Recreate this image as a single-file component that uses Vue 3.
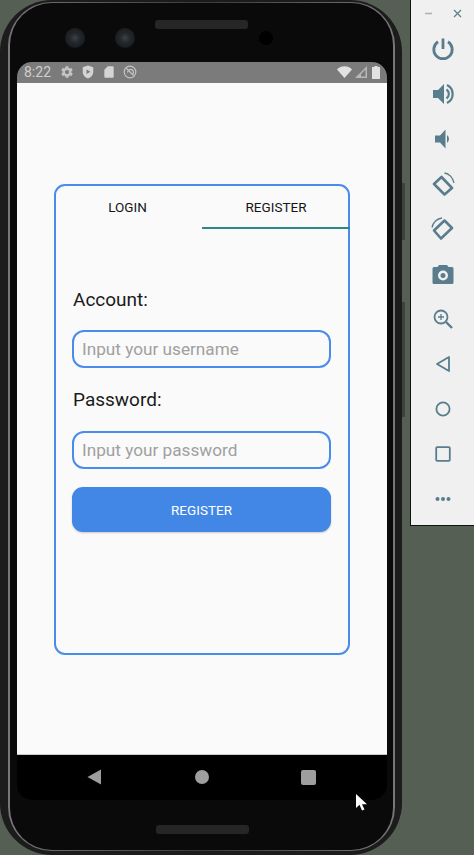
<template>
  <div class="desk">
    <div class="phone">
      <div class="ring">
        <div class="body">
          <div class="top-bezel">
            <span class="cam cam-one"></span>
            <span class="cam cam-two"></span>
            <span class="speaker speaker-top"></span>
            <span class="sensor"></span>
          </div>

          <div class="screen">
            <div class="status">
              <span class="time">8:22</span>
              <svg class="st" width="14" height="14" viewBox="0 0 24 24"><path fill="#c4c4c4" d="M19.4 13c.1-.3.1-.7.1-1s0-.7-.1-1l2.100-1.600c.2-.1.2-.4.1-.6l-2-3.500c-.1-.2-.4-.3-.6-.2l-2.500 1c-.5-.4-1.100-.7-1.700-1l-.4-2.600c0-.3-.2-.5-.5-.5h-4c-.3 0-.5.2-.5.5l-.4 2.600c-.6.3-1.200.6-1.700 1l-2.500-1c-.2-.1-.5 0-.6.2l-2 3.500c-.1.2-.1.5.1.6L4.600 11c-.1.3-.1.700-.1 1s0 .7.1 1l-2.100 1.600c-.2.1-.2.4-.1.6l2 3.500c.1.2.4.3.6.2l2.500-1c.5.4 1.100.7 1.700 1l.4 2.600c0 .3.2.5.5.5h4c.3 0 .5-.2.5-.5l.4-2.600c.6-.3 1.200-.6 1.700-1l2.500 1c.2.1.5 0 .6-.2l2-3.500c.1-.2.1-.5-.1-.6L19.400 13zM12 15.500c-1.900 0-3.500-1.600-3.500-3.500s1.600-3.500 3.500-3.500 3.500 1.600 3.500 3.500-1.600 3.500-3.500 3.500z"/></svg>
              <svg class="st" width="14" height="14" viewBox="0 0 24 24"><path fill="#d4d4d4" fill-rule="evenodd" d="M12 1 3 4v8c0 5 3.800 9.500 9 11 5.200-1.500 9-6 9-11V4l-9-3zM9.500 7.500v8l6.500-4-6.500-4z"/></svg>
              <svg class="st" width="14" height="14" viewBox="0 0 24 24"><path fill="#d4d4d4" d="M10 2h8c1.100 0 2 .9 2 2v16c0 1.100-.9 2-2 2H6c-1.100 0-2-.9-2-2V8l6-6z"/></svg>
              <svg class="st" width="14" height="14" viewBox="0 0 24 24" fill="none" stroke="#c4c4c4" stroke-width="2"><circle cx="12" cy="12" r="10"/><path d="M5.500 5.500 18 18M8 13a5 5 0 1 1 8 3.500"/></svg>
              <span class="spacer"></span>
              <svg width="15" height="12" viewBox="0 0 15 12"><path fill="#e2e2e2" d="M0 3.500C4-.8 11-.8 15 3.500L7.500 12z"/></svg>
              <svg class="signal" width="12" height="12" viewBox="0 0 12 12"><path fill="#b8b8b8" d="M12 0v12H0zM10.500 3.500 6 8v2.500h4.500z"/></svg>
              <svg class="battery" width="8" height="13" viewBox="0 0 8 13"><path fill="#e2e2e2" d="M2.500 0h3v1H8v12H0V1h2.500z"/></svg>
            </div>

            <div class="app">
              <div class="card">
                <div class="tabs">
                  <div class="tab">LOGIN</div>
                  <div class="tab active">REGISTER</div>
                </div>
                <form class="form" @submit.prevent>
                  <label class="label" for="account">Account:</label>
                  <input id="account" class="field" type="text" placeholder="Input your username" />
                  <label class="label second" for="password">Password:</label>
                  <input id="password" class="field" type="password" placeholder="Input your password" />
                  <button class="submit" type="submit">REGISTER</button>
                </form>
              </div>
            </div>

            <div class="nav">
              <svg width="15" height="16" viewBox="0 0 15 16"><path fill="#9e9e9e" d="M14 .5v15L.5 8z"/></svg>
              <span class="nav-dot"></span>
              <span class="nav-square"></span>
            </div>
          </div>

          <div class="bottom-bezel">
            <span class="speaker"></span>
          </div>
        </div>
      </div>
    </div>

    <span class="side-key key-power"></span>
    <span class="side-key key-volume"></span>

    <aside class="toolbar">
      <div class="window-btns">
        <svg width="9" height="9" viewBox="0 0 9 9"><path stroke="#a4b3ba" stroke-width="1.500" d="M1 4.500h7"/></svg>
        <svg width="9" height="9" viewBox="0 0 9 9"><path stroke="#5f8090" stroke-width="1.300" d="m1 1 7 7M8 1 1 8"/></svg>
      </div>
      <button v-for="tool in tools" :key="tool.name" class="tool" :title="tool.name">
        <svg width="24" height="24" viewBox="0 0 24 24" v-html="tool.svg"></svg>
      </button>
    </aside>

    <svg class="cursor" width="13" height="19" viewBox="0 0 13 19"><path fill="#fff" d="M1 1v14l3.500-3.200L7 17.500l2.500-1-2.500-5.200h5z"/></svg>
  </div>
</template>

<script setup>
const fill = 'fill="#5a7d8d"'
const line = 'fill="none" stroke="#5a7d8d" stroke-width="1.800"'

const tools = [
  { name: 'Power', svg: `<path fill="none" stroke="#5a7d8d" stroke-width="2.800" d="M12 1.500V12M7 4.800a9.200 9.200 0 1 0 10 0"/>` },
  { name: 'Volume up', svg: `<path ${fill} d="M2 8v8h5l6 6V2L7 8z"/><path fill="none" stroke="#5a7d8d" stroke-width="2.200" d="M15.500 7.500a5.500 5.500 0 0 1 0 9M16 3a10 10 0 0 1 0 18"/>` },
  { name: 'Volume down', svg: `<path ${fill} d="M4 8.500v7h5l5.500 6V2.500L9 8.500z"/><path ${fill} d="M16 8a5 5 0 0 1 0 8z"/>` },
  { name: 'Rotate left', svg: `<path fill="none" stroke="#5a7d8d" stroke-width="2.600" stroke-linejoin="round" d="m3 12 7.500-7 10.500 11-7.500 6.500z"/><path fill="none" stroke="#5a7d8d" stroke-width="1.300" d="M13.500 1C18 1.500 22 5.500 23 11"/>` },
  { name: 'Rotate right', svg: `<path fill="none" stroke="#5a7d8d" stroke-width="2.600" stroke-linejoin="round" d="m13.500 3.500 7.500 7.500-11 10.500-7-8z"/><path fill="none" stroke="#5a7d8d" stroke-width="1.300" d="M1 10.500C2 5.500 6 1.500 11 1"/>` },
  { name: 'Screenshot', svg: `<path ${fill} fill-rule="evenodd" d="M8 3 6.500 5H3a1.500 1.500 0 0 0-1.500 1.500v14A1.500 1.500 0 0 0 3 22h18a1.500 1.500 0 0 0 1.500-1.500v-14A1.500 1.500 0 0 0 21 5h-3.500L16 3zm4 5.500a5 5 0 1 1 0 10 5 5 0 0 1 0-10zm0 2.500a2.500 2.500 0 1 0 0 5 2.500 2.500 0 0 0 0-5z"/>` },
  { name: 'Zoom', svg: `<circle ${line} cx="10" cy="10" r="6.500"/><path fill="none" stroke="#5a7d8d" stroke-width="2.400" d="m15 15 6 6"/><path fill="none" stroke="#5a7d8d" stroke-width="1.300" d="M7 10h6M10 7v6"/>` },
  { name: 'Back', svg: `<path ${line} stroke-linejoin="round" d="M18 5v14L6 12z"/>` },
  { name: 'Home', svg: `<circle ${line} cx="12" cy="12" r="6.600"/>` },
  { name: 'Overview', svg: `<rect ${line} x="5.200" y="5.200" width="13.600" height="13.600" rx="1"/>` },
  { name: 'More', svg: `<circle ${fill} cx="6.500" cy="12" r="2"/><circle ${fill} cx="12" cy="12" r="2"/><circle ${fill} cx="17.500" cy="12" r="2"/>` }
]
</script>

<style>
html, body {
  margin: 0;
  background: #555f54;
  overflow: hidden;
}
</style>

<style scoped>
.desk {
  position: relative;
  display: flex;
  align-items: flex-start;
  width: 474px;
  height: 855px;
  overflow: hidden;
  background: #555f54;
  font-family: Roboto, "Liberation Sans", sans-serif;
}

.phone {
  box-sizing: border-box;
  flex: none;
  width: 402px;
  height: 855px;
  margin-right: 8px;
  padding: 2px 7px 4px 8px;
  border-radius: 52px;
  background: #1c1c1c;
}
.ring {
  box-sizing: border-box;
  height: 100%;
  padding: 1px 2px;
  border-radius: 44px;
  background: linear-gradient(90deg, #777, #3a3a3a 50%, #777);
}
.body {
  display: flex;
  flex-direction: column;
  box-sizing: border-box;
  height: 100%;
  padding: 0 6px 0 7px;
  border-radius: 42px;
  background: #0a0a0a;
}
.top-bezel {
  position: relative;
  flex: none;
  height: 59px;
}
.cam {
  position: absolute;
  top: 25px;
  width: 20px;
  height: 20px;
  border-radius: 50%;
  background: radial-gradient(circle, #3b4146 0, #23282c 35%, #1a1d20 70%, #121416);
}
.cam-one { left: 48px; }
.cam-two { left: 98px; }
.sensor {
  position: absolute;
  top: 28px;
  left: 242px;
  width: 14px;
  height: 14px;
  border-radius: 50%;
  background: #000;
}
.speaker {
  display: block;
  width: 93px;
  height: 9px;
  border-radius: 3px;
  background: #262626;
}
.speaker-top {
  position: absolute;
  top: 17px;
  left: 138px;
}

.screen {
  display: flex;
  flex-direction: column;
  flex: none;
  height: 738px;
  overflow: hidden;
  border-radius: 15px;
}
.status {
  display: flex;
  flex: none;
  align-items: center;
  gap: 7px;
  box-sizing: border-box;
  height: 21px;
  padding: 0 7px 1px 7px;
  background: #7b7b7b;
}
.time {
  width: 26px;
  margin-right: 3px;
  font-size: 14px;
  color: #cfcfcf;
}
.spacer { flex: 1; }
.signal { margin-left: -4px; }
.battery { margin-left: -2px; }

.app {
  display: flex;
  flex: 1;
  align-items: flex-start;
  justify-content: center;
  padding-top: 101px;
  background: #fafafa;
  border-bottom: 1px solid #c8c8c8;
}
.card {
  box-sizing: border-box;
  width: 296px;
  height: 471px;
  border: 2px solid #4a8ceb;
  border-radius: 11px;
}
.tabs {
  display: flex;
  height: 43px;
}
.tab {
  display: flex;
  flex: 0 0 146px;
  align-items: center;
  justify-content: center;
  box-sizing: border-box;
  padding-right: 3px;
  border-bottom: 2px solid transparent;
  font-size: 13.500px;
  font-weight: 450;
  color: #161616;
}
.tab.active {
  flex-basis: 148px;
  padding-right: 0;
  border-bottom-color: #2d8a83;
  margin-right: -2px;
}

.form {
  display: flex;
  flex-direction: column;
  padding: 0 17px 0 16px;
}
.label {
  margin-top: 60px;
  margin-bottom: 19px;
  padding-left: 1px;
  font-size: 19px;
  line-height: 22px;
  color: #1a1a1a;
}
.label.second {
  margin-top: 21px;
  margin-bottom: 20px;
}
.field {
  box-sizing: border-box;
  width: 100%;
  height: 38px;
  padding: 0 8px;
  border: 2.500px solid #4a8ceb;
  border-radius: 12px;
  outline: none;
  background: #fafafa;
  font-family: inherit;
  font-size: 17.200px;
}
.field::placeholder {
  color: #a0a0a0;
  opacity: 1;
}
.submit {
  height: 45px;
  margin-top: 18px;
  border: none;
  border-radius: 11px;
  background: #4287e6;
  box-shadow: 0 1px 2px rgba(0, 0, 0, 0.2);
  font-family: inherit;
  font-size: 13.500px;
  color: #fff;
}

.nav {
  display: flex;
  flex: none;
  align-items: center;
  justify-content: space-between;
  box-sizing: border-box;
  height: 45px;
  padding: 0 71px 1px 70px;
  background: #000;
}
.nav-dot {
  width: 14px;
  height: 14px;
  border-radius: 50%;
  background: #9e9e9e;
}
.nav-square {
  width: 15px;
  height: 15px;
  border-radius: 2px;
  background: #9e9e9e;
}

.bottom-bezel {
  display: flex;
  flex: none;
  justify-content: center;
  padding-top: 25px;
}

.side-key {
  position: absolute;
  left: 402px;
  width: 3px;
  background: #3c423c;
}
.key-power { top: 183px; height: 57px; }
.key-volume { top: 302px; height: 115px; }

.toolbar {
  display: flex;
  flex: none;
  flex-direction: column;
  align-items: center;
  box-sizing: border-box;
  width: 64px;
  height: 526px;
  border-left: 1px solid #111;
  border-bottom: 1px solid #111;
  background: #f0f0f0;
}
.window-btns {
  display: flex;
  gap: 20px;
  align-items: center;
  height: 26px;
}
.tool {
  display: flex;
  flex: none;
  align-items: center;
  justify-content: center;
  width: 45px;
  height: 45px;
  padding: 0;
  border: none;
  background: none;
}

.cursor {
  position: absolute;
  top: 793px;
  left: 355px;
}
</style>
